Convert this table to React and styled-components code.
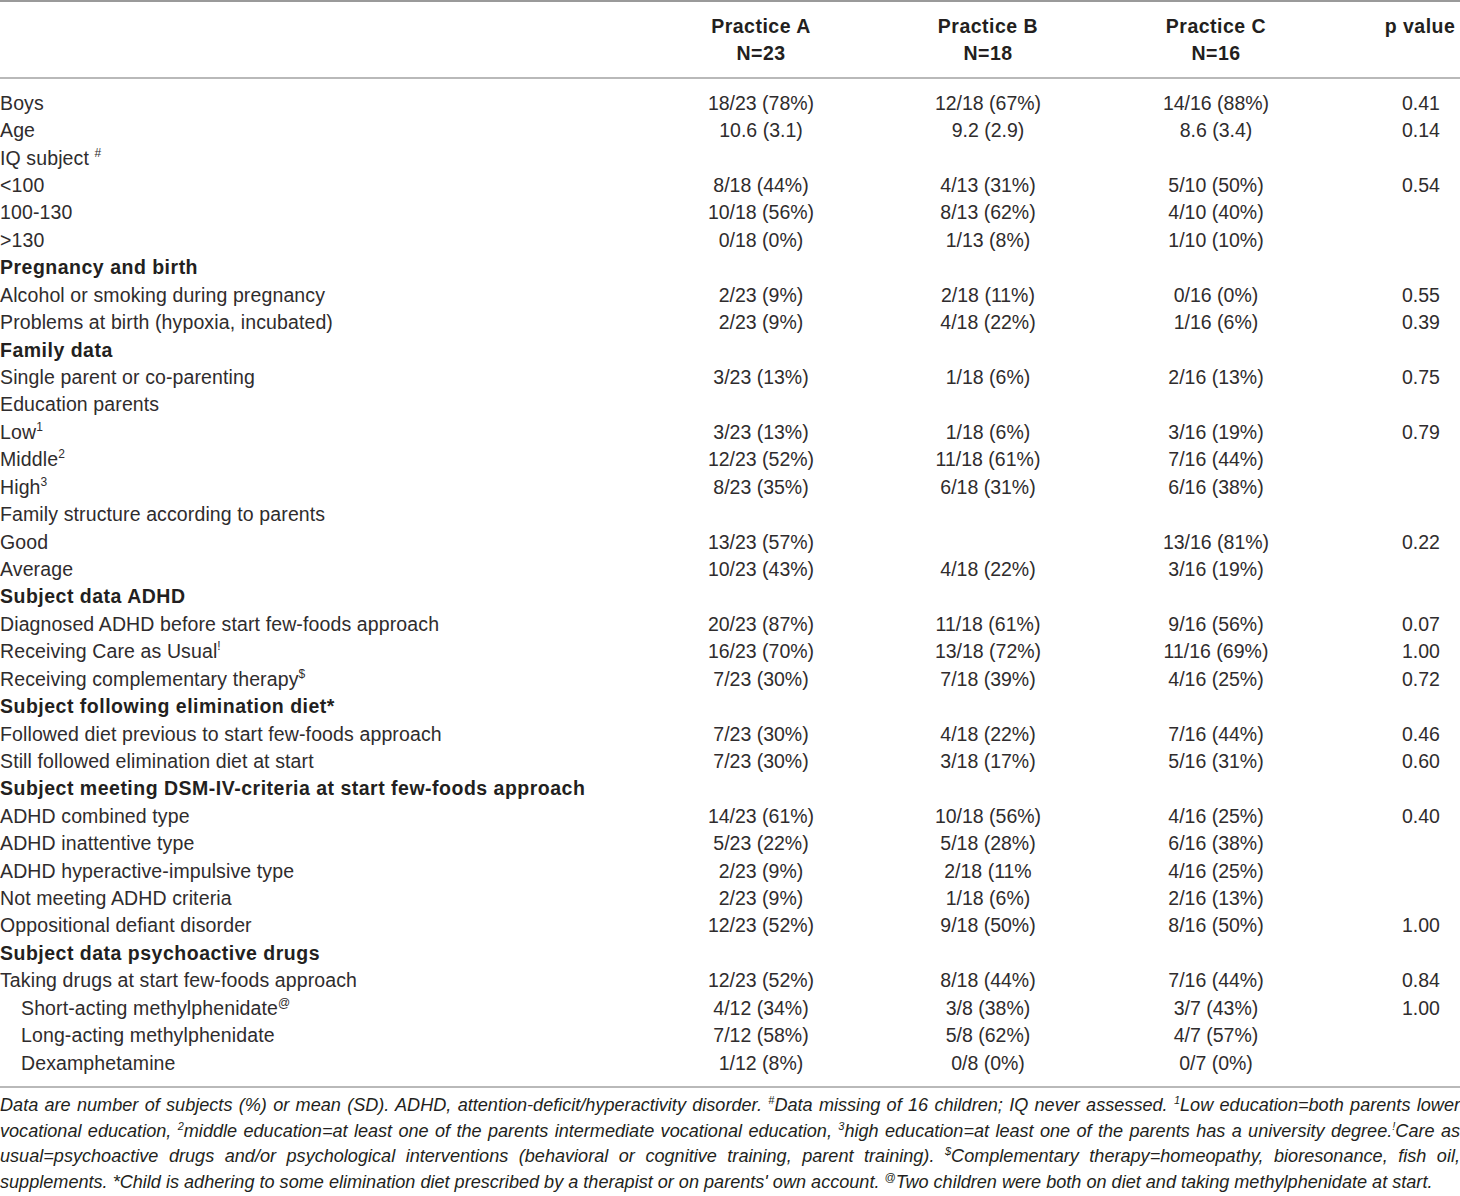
import React from 'react';
import styled, { createGlobalStyle } from 'styled-components';

const Global = createGlobalStyle`
  html, body { margin: 0; padding: 0; background: #fff; }
  body { font-family: "Liberation Sans", Arial, sans-serif; color: #231f20; }
`;

const Page = styled.div`
  width: 1460px;
`;

const cols = '648px 226px 228px 228px 130px';

const Head = styled.div`
  display: grid;
  grid-template-columns: ${cols};
  border-top: 2px solid #9a9a9a;
  border-bottom: 2px solid #b9b9b9;
  padding: 10.5px 0 10.5px;
  font-size: 19.5px;
  font-weight: bold;
  line-height: 27px;
  color: #231f20;
`;

const HeadCell = styled.div`
  text-align: center;
  padding-left: ${p => (p.$p ? '50px' : '0')};
  letter-spacing: 0.5px;
`;

const Body = styled.div`
  padding: 10.8px 0 9px;
  border-bottom: 2px solid #b9b9b9;
`;

const Row = styled.div`
  display: grid;
  grid-template-columns: ${cols};
  height: 27.43px;
  line-height: 27.43px;
  font-size: 19.5px;
  white-space: nowrap;
  color: #2f2c2d;
`;

const Label = styled.div`
  padding-left: ${p => (p.$indent ? '21px' : '0')};
  font-weight: ${p => (p.$bold ? 'bold' : 'normal')};
  color: ${p => (p.$bold ? '#231f20' : '#2f2c2d')};
  letter-spacing: ${p => (p.$bold ? '0.5px' : '0.12px')};
`;

const Cell = styled.div`
  text-align: center;
  padding-left: ${p => (p.$p ? '52px' : '0')};
`;

const Sup = styled.sup`
  font-size: 12px;
  line-height: 0;
  vertical-align: 0;
  position: relative;
  top: -8px;
`;

const Foot = styled.div`
  padding-top: 5px;
  font-size: 18.1px;
  font-style: italic;
  line-height: 25.7px;
  color: #231f20;
`;

const FootLine = styled.div`
  text-align: justify;
  text-align-last: ${p => (p.$last ? 'left' : 'justify')};
  white-space: nowrap;
`;

const FSup = styled.sup`
  font-size: 11px;
  line-height: 0;
  vertical-align: 0;
  position: relative;
  top: -7px;
`;

const rows = [
  { label: 'Boys', a: '18/23 (78%)', b: '12/18 (67%)', c: '14/16 (88%)', p: '0.41' },
  { label: 'Age', a: '10.6 (3.1)', b: '9.2 (2.9)', c: '8.6 (3.4)', p: '0.14' },
  { label: 'IQ subject ', sup: '#' },
  { label: '<100', a: '8/18 (44%)', b: '4/13 (31%)', c: '5/10 (50%)', p: '0.54' },
  { label: '100-130', a: '10/18 (56%)', b: '8/13 (62%)', c: '4/10 (40%)' },
  { label: '>130', a: '0/18 (0%)', b: '1/13 (8%)', c: '1/10 (10%)' },
  { label: 'Pregnancy and birth', bold: true },
  { label: 'Alcohol or smoking during pregnancy', a: '2/23 (9%)', b: '2/18 (11%)', c: '0/16 (0%)', p: '0.55' },
  { label: 'Problems at birth (hypoxia, incubated)', a: '2/23 (9%)', b: '4/18 (22%)', c: '1/16 (6%)', p: '0.39' },
  { label: 'Family data', bold: true },
  { label: 'Single parent or co-parenting', a: '3/23 (13%)', b: '1/18 (6%)', c: '2/16 (13%)', p: '0.75' },
  { label: 'Education parents' },
  { label: 'Low', sup: '1', a: '3/23 (13%)', b: '1/18 (6%)', c: '3/16 (19%)', p: '0.79' },
  { label: 'Middle', sup: '2', a: '12/23 (52%)', b: '11/18 (61%)', c: '7/16 (44%)' },
  { label: 'High', sup: '3', a: '8/23 (35%)', b: '6/18 (31%)', c: '6/16 (38%)' },
  { label: 'Family structure according to parents' },
  { label: 'Good', a: '13/23 (57%)', b: '', c: '13/16 (81%)', p: '0.22' },
  { label: 'Average', a: '10/23 (43%)', b: '4/18 (22%)', c: '3/16 (19%)' },
  { label: 'Subject data ADHD', bold: true },
  { label: 'Diagnosed ADHD before start few-foods approach', a: '20/23 (87%)', b: '11/18 (61%)', c: '9/16 (56%)', p: '0.07' },
  { label: 'Receiving Care as Usual', sup: '!', a: '16/23 (70%)', b: '13/18 (72%)', c: '11/16 (69%)', p: '1.00' },
  { label: 'Receiving complementary therapy', sup: '$', a: '7/23 (30%)', b: '7/18 (39%)', c: '4/16 (25%)', p: '0.72' },
  { label: 'Subject following elimination diet*', bold: true },
  { label: 'Followed diet previous to start few-foods approach', a: '7/23 (30%)', b: '4/18 (22%)', c: '7/16 (44%)', p: '0.46' },
  { label: 'Still followed elimination diet at start', a: '7/23 (30%)', b: '3/18 (17%)', c: '5/16 (31%)', p: '0.60' },
  { label: 'Subject meeting DSM-IV-criteria at start few-foods approach', bold: true },
  { label: 'ADHD combined type', a: '14/23 (61%)', b: '10/18 (56%)', c: '4/16 (25%)', p: '0.40' },
  { label: 'ADHD inattentive type', a: '5/23 (22%)', b: '5/18 (28%)', c: '6/16 (38%)' },
  { label: 'ADHD hyperactive-impulsive type', a: '2/23 (9%)', b: '2/18 (11%', c: '4/16 (25%)' },
  { label: 'Not meeting ADHD criteria', a: '2/23 (9%)', b: '1/18 (6%)', c: '2/16 (13%)' },
  { label: 'Oppositional defiant disorder', a: '12/23 (52%)', b: '9/18 (50%)', c: '8/16 (50%)', p: '1.00' },
  { label: 'Subject data psychoactive drugs', bold: true },
  { label: 'Taking drugs at start few-foods approach', a: '12/23 (52%)', b: '8/18 (44%)', c: '7/16 (44%)', p: '0.84' },
  { label: 'Short-acting methylphenidate', sup: '@', indent: true, a: '4/12 (34%)', b: '3/8 (38%)', c: '3/7 (43%)', p: '1.00' },
  { label: 'Long-acting methylphenidate', indent: true, a: '7/12 (58%)', b: '5/8 (62%)', c: '4/7 (57%)' },
  { label: 'Dexamphetamine', indent: true, a: '1/12 (8%)', b: '0/8 (0%)', c: '0/7 (0%)' },
];

export default function App() {
  return (
    <Page>
      <Global />
      <Head>
        <HeadCell />
        <HeadCell>Practice A<br />N=23</HeadCell>
        <HeadCell>Practice B<br />N=18</HeadCell>
        <HeadCell>Practice C<br />N=16</HeadCell>
        <HeadCell $p>p value</HeadCell>
      </Head>
      <Body>
        {rows.map((r, i) => (
          <Row key={i}>
            <Label $bold={r.bold} $indent={r.indent}>
              {r.label}
              {r.sup && <Sup>{r.sup}</Sup>}
            </Label>
            <Cell>{r.a}</Cell>
            <Cell>{r.b}</Cell>
            <Cell>{r.c}</Cell>
            <Cell $p>{r.p}</Cell>
          </Row>
        ))}
      </Body>
      <Foot>
        <FootLine>
          Data are number of subjects (%) or mean (SD). ADHD, attention-deficit/hyperactivity disorder. <FSup>#</FSup>Data missing of 16 children; IQ never assessed. <FSup>1</FSup>Low education=both parents lower
        </FootLine>
        <FootLine>
          vocational education, <FSup>2</FSup>middle education=at least one of the parents intermediate vocational education, <FSup>3</FSup>high education=at least one of the parents has a university degree.<FSup>!</FSup>Care as
        </FootLine>
        <FootLine>
          usual=psychoactive drugs and/or psychological interventions (behavioral or cognitive training, parent training). <FSup>$</FSup>Complementary therapy=homeopathy, bioresonance, fish oil,
        </FootLine>
        <FootLine $last>
          supplements. *Child is adhering to some elimination diet prescribed by a therapist or on parents' own account. <FSup>@</FSup>Two children were both on diet and taking methylphenidate at start.
        </FootLine>
      </Foot>
    </Page>
  );
}
